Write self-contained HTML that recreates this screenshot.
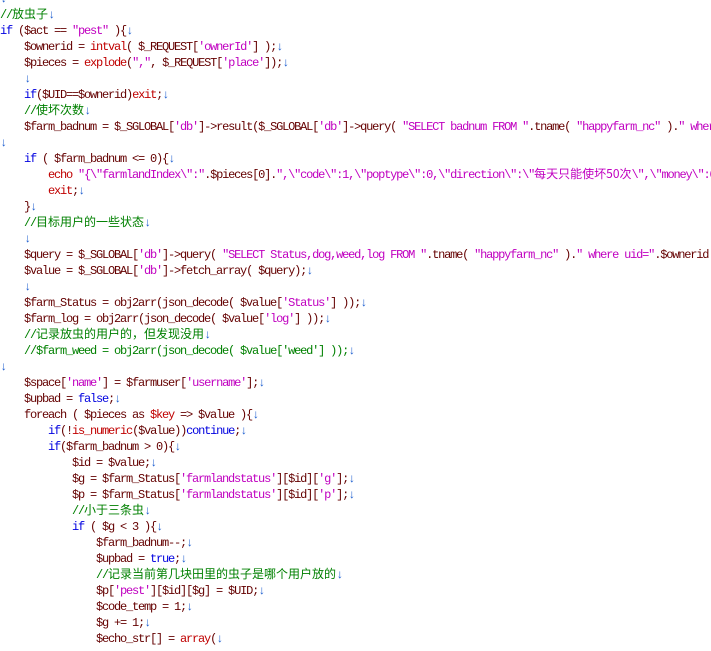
<!DOCTYPE html>
<html><head><meta charset="utf-8"><style>
html,body{margin:0;padding:0;background:#fff;width:711px;height:646px;overflow:hidden}
pre{margin:0;position:absolute;left:0;top:-9px;width:711px;height:660px;overflow:hidden;font-family:"Liberation Mono","Noto Sans CJK SC",monospace;font-size:12px;line-height:16px;letter-spacing:-1.2px;color:#640000;white-space:pre}
.k{color:#0000e0}.f{color:#c00000}.s{color:#c000c0}.c{color:#008000}.a{color:#2060d0}
.z{letter-spacing:0;font-family:"Noto Sans CJK SC",sans-serif;line-height:0}
</style></head><body><pre><span class="a">↓</span>
<span class="c">//<span class="z">放虫子</span></span><span class="a">↓</span>
<span class="k">if</span> ($act == <span class="s">"pest"</span> ){<span class="a">↓</span>
    $ownerid = <span class="f">intval</span>( $_REQUEST[<span class="s">'ownerId'</span>] );<span class="a">↓</span>
    $pieces = <span class="f">explode</span>(<span class="s">","</span>, $_REQUEST[<span class="s">'place'</span>]);<span class="a">↓</span>
    <span class="a">↓</span>
    <span class="k">if</span>($UID==$ownerid)<span class="f">exit</span>;<span class="a">↓</span>
    <span class="c">//<span class="z">使坏次数</span></span><span class="a">↓</span>
    $farm_badnum = $_SGLOBAL[<span class="s">'db'</span>]-&gt;result($_SGLOBAL[<span class="s">'db'</span>]-&gt;query( <span class="s">"SELECT badnum FROM "</span>.tname( <span class="s">"happyfarm_nc"</span> ).<span class="s">" where uid="</span>
<span class="a">↓</span>
    <span class="k">if</span> ( $farm_badnum &lt;= 0){<span class="a">↓</span>
        <span class="f">echo</span> <span class="s">"{\"farmlandIndex\":"</span>.$pieces[0].<span class="s">",\"code\":1,\"poptype\":0,\"direction\":\"<span class="z">每天只能使坏50次</span>\",\"money\":0</span>
        <span class="f">exit</span>;<span class="a">↓</span>
    }<span class="a">↓</span>
    <span class="c">//<span class="z">目标用户的一些状态</span></span><span class="a">↓</span>
    <span class="a">↓</span>
    $query = $_SGLOBAL[<span class="s">'db'</span>]-&gt;query( <span class="s">"SELECT Status,dog,weed,log FROM "</span>.tname( <span class="s">"happyfarm_nc"</span> ).<span class="s">" where uid="</span>.$ownerid
    $value = $_SGLOBAL[<span class="s">'db'</span>]-&gt;fetch_array( $query);<span class="a">↓</span>
    <span class="a">↓</span>
    $farm_Status = obj2arr(json_decode( $value[<span class="s">'Status'</span>] ));<span class="a">↓</span>
    $farm_log = obj2arr(json_decode( $value[<span class="s">'log'</span>] ));<span class="a">↓</span>
    <span class="c">//<span class="z">记录放虫的用户的，但发现没用</span></span><span class="a">↓</span>
    <span class="c">//$farm_weed = obj2arr(json_decode( $value['weed'] ));</span><span class="a">↓</span>
<span class="a">↓</span>
    $space[<span class="s">'name'</span>] = $farmuser[<span class="s">'username'</span>];<span class="a">↓</span>
    $upbad = <span class="k">false</span>;<span class="a">↓</span>
    foreach ( $pieces as <span class="f">$key</span> =&gt; $value ){<span class="a">↓</span>
        <span class="k">if</span>(!<span class="f">is_numeric</span>($value))<span class="k">continue</span>;<span class="a">↓</span>
        <span class="k">if</span>($farm_badnum &gt; 0){<span class="a">↓</span>
            $id = $value;<span class="a">↓</span>
            $g = $farm_Status[<span class="s">'farmlandstatus'</span>][$id][<span class="s">'g'</span>];<span class="a">↓</span>
            $p = $farm_Status[<span class="s">'farmlandstatus'</span>][$id][<span class="s">'p'</span>];<span class="a">↓</span>
            <span class="c">//<span class="z">小于三条虫</span></span><span class="a">↓</span>
            <span class="k">if</span> ( $g &lt; 3 ){<span class="a">↓</span>
                $farm_badnum--;<span class="a">↓</span>
                $upbad = <span class="k">true</span>;<span class="a">↓</span>
                <span class="c">//<span class="z">记录当前第几块田里的虫子是哪个用户放的</span></span><span class="a">↓</span>
                $p[<span class="s">'pest'</span>][$id][$g] = $UID;<span class="a">↓</span>
                $code_temp = 1;<span class="a">↓</span>
                $g += 1;<span class="a">↓</span>
                $echo_str[] = <span class="f">array</span>(<span class="a">↓</span>
</pre></body></html>
